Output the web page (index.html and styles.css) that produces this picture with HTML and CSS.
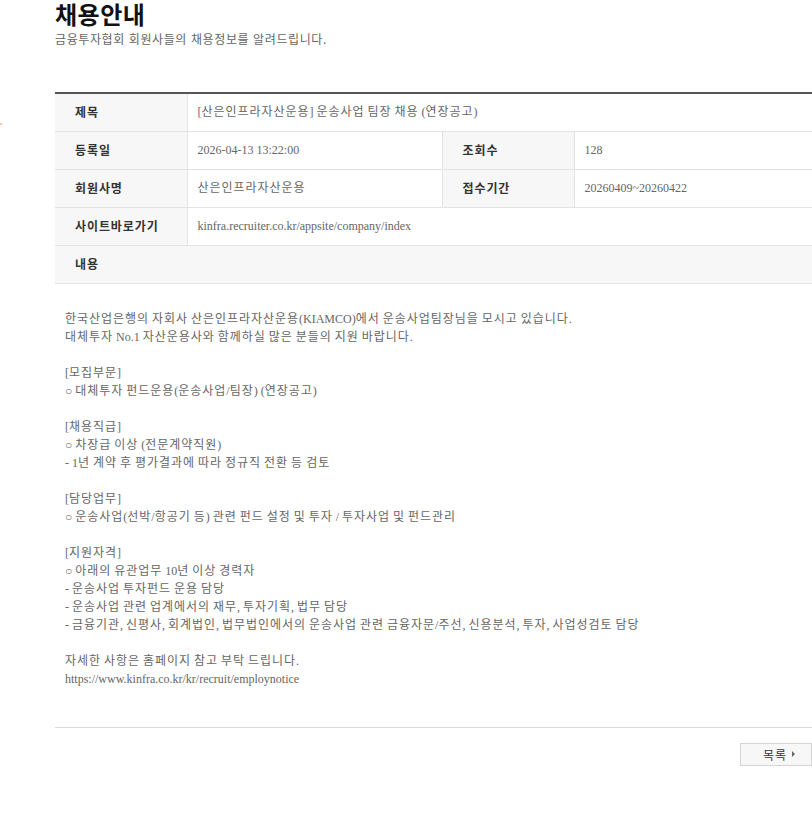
FILE: index.html
```html
<!DOCTYPE html>
<html lang="ko">
<head>
<meta charset="utf-8">
<title>채용안내</title>
<link rel="stylesheet" href="styles.css">
</head>
<body>
<span class="dot"></span>
<div class="wrap">
  <h1 class="title">채용안내</h1>
  <p class="sub">금융투자협회 회원사들의 채용정보를 알려드립니다.</p>

  <table class="view">
    <colgroup>
      <col class="c-label"><col class="c-val1"><col class="c-label"><col>
    </colgroup>
    <tr>
      <th>제목</th>
      <td colspan="3">[<span class="k">산은인프라자산운용</span>] <span class="k">운송사업</span> <span class="k">팀장</span> <span class="k">채용</span> (<span class="k">연장공고</span>)</td>
    </tr>
    <tr>
      <th>등록일</th>
      <td>2026-04-13 13:22:00</td>
      <th>조회수</th>
      <td>128</td>
    </tr>
    <tr>
      <th>회원사명</th>
      <td><span class="k">산은인프라자산운용</span></td>
      <th>접수기간</th>
      <td>20260409~20260422</td>
    </tr>
    <tr>
      <th>사이트바로가기</th>
      <td colspan="3">kinfra.recruiter.co.kr/appsite/company/index</td>
    </tr>
    <tr>
      <th class="full" colspan="4">내용</th>
    </tr>
  </table>

  <div class="content"><span class="k">한국산업은행의</span> <span class="k">자회사</span> <span class="k">산은인프라자산운용</span>(KIAMCO)<span class="k">에서</span> <span class="k">운송사업팀장님을</span> <span class="k">모시고</span> <span class="k">있습니다</span>.<br>
<span class="k">대체투자</span> No.1 <span class="k">자산운용사와</span> <span class="k">함께하실</span> <span class="k">많은</span> <span class="k">분들의</span> <span class="k">지원</span> <span class="k">바랍니다</span>.<br>
<br>
[<span class="k">모집부문</span>]<br>
○ <span class="k">대체투자</span> <span class="k">펀드운용</span>(<span class="k">운송사업</span>/<span class="k">팀장</span>) (<span class="k">연장공고</span>)<br>
<br>
[<span class="k">채용직급</span>]<br>
○ <span class="k">차장급</span> <span class="k">이상</span> (<span class="k">전문계약직원</span>)<br>
- 1<span class="k">년</span> <span class="k">계약</span> <span class="k">후</span> <span class="k">평가결과에</span> <span class="k">따라</span> <span class="k">정규직</span> <span class="k">전환</span> <span class="k">등</span> <span class="k">검토</span><br>
<br>
[<span class="k">담당업무</span>]<br>
○ <span class="k">운송사업</span>(<span class="k">선박</span>/<span class="k">항공기</span> <span class="k">등</span>) <span class="k">관련</span> <span class="k">펀드</span> <span class="k">설정</span> <span class="k">및</span> <span class="k">투자</span> / <span class="k">투자사업</span> <span class="k">및</span> <span class="k">펀드관리</span><br>
<br>
[<span class="k">지원자격</span>]<br>
○ <span class="k">아래의</span> <span class="k">유관업무</span> 10<span class="k">년</span> <span class="k">이상</span> <span class="k">경력자</span><br>
- <span class="k">운송사업</span> <span class="k">투자펀드</span> <span class="k">운용</span> <span class="k">담당</span><br>
- <span class="k">운송사업</span> <span class="k">관련</span> <span class="k">업계에서의</span> <span class="k">재무</span>, <span class="k">투자기획</span>, <span class="k">법무</span> <span class="k">담당</span><br>
- <span class="k">금융기관</span>, <span class="k">신평사</span>, <span class="k">회계법인</span>, <span class="k">법무법인에서의</span> <span class="k">운송사업</span> <span class="k">관련</span> <span class="k">금융자문</span>/<span class="k">주선</span>, <span class="k">신용분석</span>, <span class="k">투자</span>, <span class="k">사업성검토</span> <span class="k">담당</span><br>
<br>
<span class="k">자세한</span> <span class="k">사항은</span> <span class="k">홈페이지</span> <span class="k">참고</span> <span class="k">부탁</span> <span class="k">드립니다</span>.<br>
https://www.kinfra.co.kr/kr/recruit/employnotice</div>

  <div class="btns">
    <a class="btn" href="#">목록 <span class="arr"></span></a>
  </div>
</div>
</body>
</html>
```

FILE: styles.css
```css
html, body {
  margin: 0;
  padding: 0;
  background: #fff;
}
body {
  overflow-x: hidden;
  font-family: "Liberation Serif", "Noto Sans CJK KR", serif;
  color: #666;
  position: relative;
}
.dot {
  position: absolute;
  left: 0;
  top: 123px;
  width: 2px;
  height: 2px;
  background: #ffb38a;
  border-radius: 1px;
}
.wrap {
  padding-left: 55px;
  width: 757px;
}
.title {
  margin: 0;
  font-family: "Noto Sans CJK KR", sans-serif;
  font-size: 24px;
  line-height: 28px;
  font-weight: 700;
  letter-spacing: 0.5px;
  color: #111;
}
.sub {
  margin: 3px 0 0;
  font-family: "Noto Sans CJK KR", sans-serif;
  font-size: 12px;
  line-height: 16px;
  letter-spacing: 0.6px;
  color: #666;
}
.k {
  letter-spacing: 0.96px;
}
.view {
  margin-top: 45px;
  width: 100%;
  border-collapse: collapse;
  border-top: 2px solid #555;
  table-layout: fixed;
}
.c-label { width: 132px; }
.c-val1 { width: 255px; }
.view th,
.view td {
  height: 38px;
  padding: 0;
  border-bottom: 1px solid #e3e3e3;
  font-size: 12px;
  line-height: 16px;
  vertical-align: middle;
  text-align: left;
  box-sizing: border-box;
}
.view th {
  padding-left: 20px;
  background: #f7f7f7;
  font-family: "Noto Sans CJK KR", sans-serif;
  font-weight: 700;
  letter-spacing: 0.9px;
  color: #333;
  border-right: 1px solid #e3e3e3;
}
.view td {
  padding-left: 10px;
  color: #666;
  border-right: 1px solid #e3e3e3;
}
.view td:last-child { border-right: 0; }
.view th.full { border-right: 0; }
.content {
  padding: 26px 10px 39px;
  font-size: 12px;
  line-height: 18px;
  color: #666;
  border-bottom: 1px solid #ddd;
  white-space: nowrap;
}
.btns {
  display: flex;
  justify-content: flex-end;
  padding-top: 15px;
}
.btn {
  display: flex;
  align-items: center;
  justify-content: center;
  gap: 5px;
  width: 72px;
  height: 23px;
  padding-left: 6px;
  box-sizing: border-box;
  border: 1px solid #d4d4d4;
  background: #f7f7f7;
  font-family: "Noto Sans CJK KR", sans-serif;
  font-size: 12px;
  letter-spacing: 1px;
  color: #333;
  text-decoration: none;
}
.arr {
  width: 0;
  height: 0;
  border-top: 3px solid transparent;
  border-bottom: 3px solid transparent;
  border-left: 3px solid #666;
}
```
